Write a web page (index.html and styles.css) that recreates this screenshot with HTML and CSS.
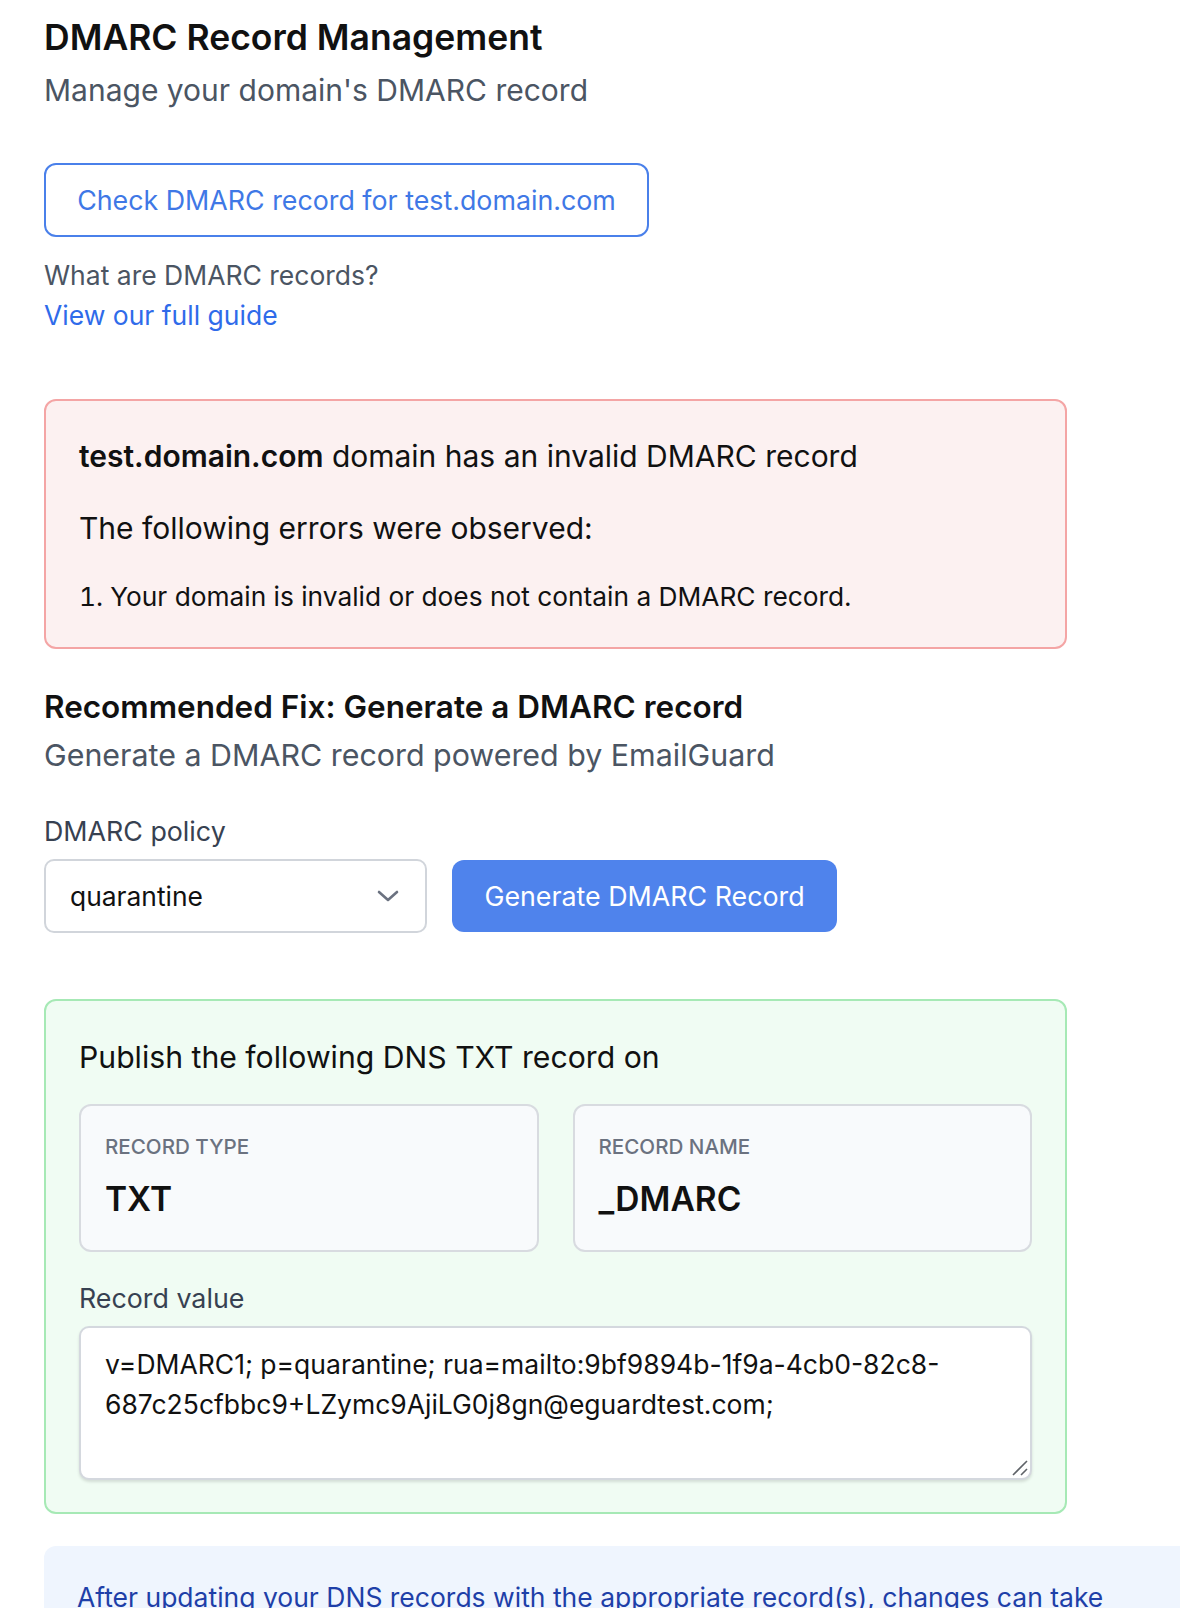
FILE: index.html
```html
<!DOCTYPE html>
<html lang="en">
<head>
<meta charset="utf-8">
<title>DMARC Record Management</title>
<link rel="stylesheet" href="styles.css">
</head>
<body>
<main class="page">
  <header class="head">
    <h1 class="title">DMARC Record Management</h1>
    <p class="subtitle">Manage your domain's DMARC record</p>
  </header>

  <button class="btn-outline" type="button">Check DMARC record for test.domain.com</button>

  <div class="guide">
    <p class="guide-q">What are DMARC records?</p>
    <a class="guide-link" href="#">View our full guide</a>
  </div>

  <section class="alert-error">
    <p class="alert-title"><strong>test.domain.com</strong> domain has an invalid DMARC record</p>
    <p class="alert-text">The following errors were observed:</p>
    <ol class="alert-list">
      <li>Your domain is invalid or does not contain a DMARC record.</li>
    </ol>
  </section>

  <section class="fix">
    <h2 class="fix-title">Recommended Fix: Generate a DMARC record</h2>
    <p class="fix-sub">Generate a DMARC record powered by EmailGuard</p>
    <p class="field-label">DMARC policy</p>
    <div class="policy-row">
      <div class="select">
        <span>quarantine</span>
        <svg class="chevron" width="22" height="12" viewBox="0 0 22 12" aria-hidden="true"><path d="M2 2 L11 10 L20 2" fill="none" stroke="#6b7280" stroke-width="2.6" stroke-linecap="round" stroke-linejoin="round"/></svg>
      </div>
      <button class="btn-primary" type="button">Generate DMARC Record</button>
    </div>
  </section>

  <section class="result">
    <p class="result-title">Publish the following DNS TXT record on</p>
    <div class="cards">
      <div class="card">
        <p class="card-label">RECORD TYPE</p>
        <p class="card-value">TXT</p>
      </div>
      <div class="card">
        <p class="card-label">RECORD NAME</p>
        <p class="card-value">_DMARC</p>
      </div>
    </div>
    <p class="field-label value-label">Record value</p>
    <div class="value-wrap">
      <textarea class="value-box" readonly>v=DMARC1; p=quarantine; rua=mailto:9bf9894b-1f9a-4cb0-82c8-687c25cfbbc9+LZymc9AjiLG0j8gn@eguardtest.com;</textarea>
      <svg class="grip" width="16" height="16" viewBox="0 0 16 16" aria-hidden="true"><path d="M1 15 L15 1 M9 15 L15 9" fill="none" stroke="#5f6368" stroke-width="1.6"/></svg>
    </div>
  </section>

  <section class="note">
    <p>After updating your DNS records with the appropriate record(s), changes can take up to 48 hours to propagate.</p>
  </section>
</main>
</body>
</html>
```

FILE: styles.css
```css
html { overflow-x: hidden; }
* { box-sizing: border-box; }
body {
  margin: 0;
  background: #ffffff;
  font-family: "Inter", "Noto Sans", sans-serif;
  color: #111111;
}
p, h1, h2, ol { margin: 0; }

.page {
  padding: 16px 0 0 44px;
  width: 1300px;
}

.title {
  font-size: 35.5px;
  line-height: 44px;
  font-weight: 600;
  color: #111111;
}
.subtitle {
  margin-top: 10px;
  font-size: 30px;
  line-height: 40px;
  color: #4b5563;
}

.btn-outline {
  display: block;
  margin-top: 53px;
  width: 605px;
  height: 74px;
  border: 2px solid #4a80ea;
  border-radius: 12px;
  background: #ffffff;
  color: #3f78e6;
  font-family: inherit;
  font-size: 26.8px;
  padding: 0;
}

.guide { margin-top: 18px; }
.guide-q {
  font-size: 26.5px;
  line-height: 40px;
  color: #4b5563;
}
.guide-link {
  display: block;
  font-size: 26.5px;
  line-height: 40px;
  color: #2f6bea;
  text-decoration: none;
}

.alert-error {
  margin-top: 64px;
  width: 1023px;
  padding: 35px 33px 32px;
  background: #fcf1f1;
  border: 2px solid #f4a5a5;
  border-radius: 12px;
}
.alert-title {
  font-size: 30px;
  line-height: 40px;
  color: #111111;
}
.alert-title strong { font-weight: 600; }
.alert-text {
  margin-top: 32px;
  font-size: 30px;
  line-height: 40px;
}
.alert-list {
  margin-top: 31px;
  padding: 0;
  list-style: decimal inside;
  font-size: 26.3px;
  line-height: 36px;
}

.fix { margin-top: 34px; }
.fix-title {
  font-size: 31.5px;
  line-height: 48px;
  font-weight: 600;
}
.fix-sub {
  font-size: 30.4px;
  line-height: 48px;
  color: #4b5563;
}
.field-label {
  margin-top: 34px;
  font-size: 26.8px;
  line-height: 36px;
  color: #374151;
}
.policy-row {
  margin-top: 10px;
  display: flex;
  gap: 25px;
  align-items: center;
}
.select {
  width: 383px;
  height: 74px;
  border: 2px solid #d1d5db;
  border-radius: 10px;
  background: #ffffff;
  display: flex;
  align-items: center;
  justify-content: space-between;
  padding: 0 26px 0 24px;
  font-size: 26.4px;
  color: #111111;
}
.btn-primary {
  width: 385px;
  height: 72px;
  border: none;
  border-radius: 12px;
  background: #4f83ec;
  color: #ffffff;
  font-family: inherit;
  font-size: 26.8px;
  padding: 0;
}

.result {
  margin-top: 66px;
  width: 1023px;
  padding: 36px 33px 32px;
  background: #f0fcf3;
  border: 2px solid #a6e9b5;
  border-radius: 12px;
}
.result-title {
  font-size: 30.2px;
  line-height: 40px;
}
.cards {
  margin-top: 27px;
  display: grid;
  grid-template-columns: 1fr 1fr;
  gap: 34px;
}
.card {
  height: 148px;
  padding: 27px 24px 0;
  background: #f8fafc;
  border: 2px solid #d8dbe0;
  border-radius: 12px;
}
.card-label {
  font-size: 20.6px;
  line-height: 28px;
  color: #6b7280;
  font-weight: 500;
}
.card-value {
  margin-top: 16px;
  font-size: 33.5px;
  line-height: 44px;
  font-weight: 600;
  color: #111111;
}
.value-label { margin-top: 28px; }
.value-wrap {
  position: relative;
  margin-top: 10px;
}
.value-box {
  display: block;
  width: 100%;
  height: 154px;
  padding: 16px 24px;
  border: 2px solid #d4d8de;
  border-radius: 10px;
  background: #ffffff;
  box-shadow: 0 2px 3px rgba(0,0,0,0.12);
  font-family: inherit;
  font-size: 26.5px;
  line-height: 40px;
  color: #111111;
  resize: none;
  outline: none;
}
.grip {
  position: absolute;
  right: 4px;
  bottom: 4px;
}

.note {
  margin-top: 32px;
  width: 1200px;
  padding: 31px 33px 40px;
  background: #eff5fe;
  border-radius: 12px;
}
.note p {
  max-width: 1050px;
  font-size: 26.5px;
  line-height: 40px;
  color: #1e3fa8;
}
```
